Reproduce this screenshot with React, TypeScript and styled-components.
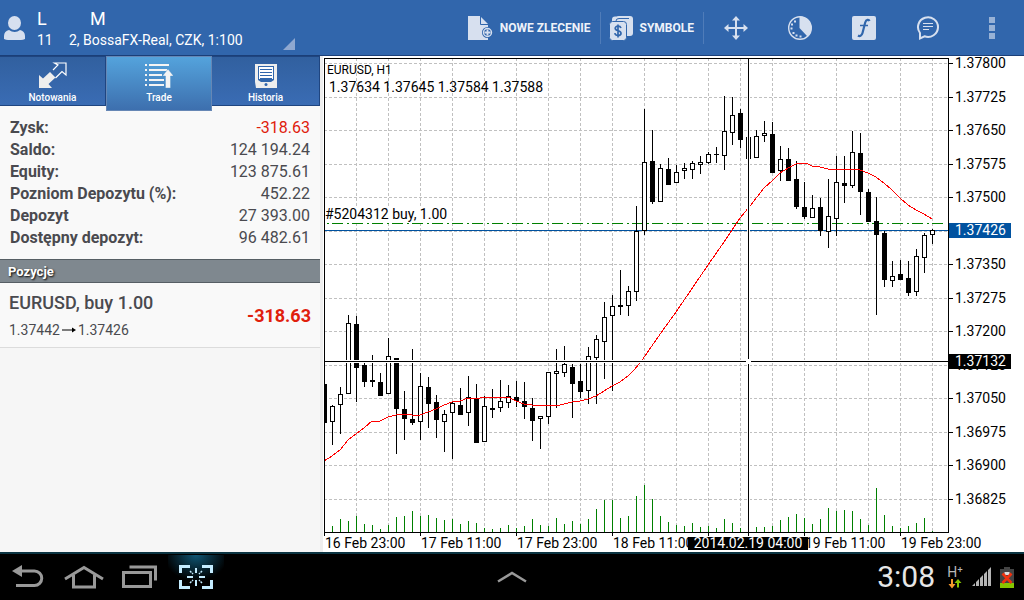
import React from "react";
import styled, { createGlobalStyle, css } from "styled-components";

const GlobalStyle = createGlobalStyle`
  * { box-sizing: border-box; }
  body { margin: 0; font-family: Roboto, "Liberation Sans", sans-serif; background: #fff; }
  button { font: inherit; color: inherit; border: 0; padding: 0; background: none; cursor: pointer; }
  svg { display: block; flex: none; }
`;

const Screen = styled.div`
  display: flex;
  flex-direction: column;
  min-height: 100vh;
`;

/* ---------- header ---------- */

const Header = styled.header`
  display: flex;
  justify-content: space-between;
  height: 56px;
  background: #3166ac;
  border-bottom: 1px solid #1b3f78;
  color: #fff;
`;

const Account = styled.button`
  display: flex;
  align-items: center;
  width: 295px;
  text-align: left;
`;

const AccountText = styled.span`
  flex: 1;
  display: flex;
  flex-direction: column;
  padding-left: 11px;
  padding-top: 3px;
  white-space: pre;
`;

const AccountName = styled.span`
  display: flex;
  font-size: 18px;
  line-height: 22px;
`;

const AccountInfo = styled.span`
  display: flex;
  font-size: 14px;
  line-height: 20px;
`;

const NamePart = styled.span<{ $w?: number }>`
  width: ${(p) => (p.$w ? `${p.$w}px` : "auto")};
`;

const Corner = styled.span`
  align-self: flex-end;
  margin-bottom: 5px;
  border-left: 12px solid transparent;
  border-bottom: 12px solid #8fa8d0;
`;

const Toolbar = styled.nav`
  display: flex;
  align-items: center;
`;

const TextAction = styled.button`
  display: flex;
  align-items: center;
  gap: 7px;
  height: 32px;
  padding: 0 9px 0 8px;
  border-right: 1px solid #4f7cb9;
  font-size: 12px;
  font-weight: 700;
  color: #eef2f9;
  white-space: nowrap;
`;

const IconAction = styled.button`
  display: flex;
  align-items: center;
  justify-content: center;
  width: 64px;
  height: 55px;
`;

/* ---------- left side ---------- */

const Main = styled.main`
  flex: 1;
  display: flex;
`;

const Side = styled.section`
  display: flex;
  flex-direction: column;
  width: 320px;
  flex: none;
  background: #f6f6f6;
`;

const Tabs = styled.div`
  display: grid;
  grid-template-columns: 106px 106px 1fr;
  height: 50px;
`;

const Tab = styled.button<{ $active?: boolean }>`
  display: flex;
  flex-direction: column;
  align-items: center;
  justify-content: flex-start;
  gap: 1px;
  height: 50px;
  padding-top: 5px;
  color: #fff;
  font-size: 10px;
  font-weight: 500;
  line-height: 14px;
  background: linear-gradient(#31609f, #3a6cb4);
  border: 1px solid #1f4580;
  border-width: 1px 1px 1px 0;
  ${(p) =>
    p.$active &&
    css`
      position: relative;
      height: 55px;
      background: linear-gradient(#54a3dc, #3d6fae);
      border: 1px solid #6687b5;
    `}
`;

const Summary = styled.table`
  border-collapse: collapse;
  width: 100%;
  background: #f9f9f9;
  border-top: 11px solid #f9f9f9;
  border-bottom: 10px solid #f9f9f9;
  color: #4a4a4f;
  font-size: 16px;
  th, td { padding: 0; height: 22px; line-height: 22px; }
  th { text-align: left; padding-left: 10px; font-weight: 700; }
  td { text-align: right; padding-right: 10px; }
`;

const Value = styled.td<{ $loss?: boolean }>`
  color: ${(p) => (p.$loss ? "#e0200c" : "#4a4a4f")};
`;

const SectionTitle = styled.h2`
  margin: 0;
  height: 24px;
  padding-left: 8px;
  background: #7f888f;
  border-top: 1px solid #565e64;
  border-bottom: 1px solid #565e64;
  color: #fff;
  font-size: 13px;
  font-weight: 700;
  line-height: 23px;
  text-shadow: 1px 1px 2px #000;
`;

const Position = styled.article`
  display: flex;
  align-items: center;
  justify-content: space-between;
  height: 65px;
  padding: 0 9px;
  background: #f9f9f9;
  border-bottom: 1px solid #dcdcdc;
  color: #4a4a4f;
`;

const PositionText = styled.div`
  padding-top: 2px;
`;

const PositionName = styled.div`
  font-size: 18px;
  font-weight: 500;
  line-height: 28px;
`;

const PositionPrices = styled.div`
  display: flex;
  align-items: center;
  gap: 2px;
  font-size: 14px;
  line-height: 26px;
`;

const Profit = styled.div`
  font-size: 18px;
  font-weight: 700;
  color: #e0200c;
`;

/* ---------- chart ---------- */

const Chart = styled.section`
  flex: 1;
  min-width: 0;
  display: grid;
  grid-template-columns: minmax(0, 1fr) 70px;
  grid-template-rows: 1fr 16px;
  padding-left: 4px;
  background: linear-gradient(90deg, #eeeeee 3px, #fff 3px);
  color: #000;
  font-size: 14px;
`;

const Plot = styled.div`
  position: relative;
  min-height: 480px;
`;

const PlotSvg = styled.svg`
  width: 100%;
  height: 100%;
  background: #fff;
`;

const PlotText = styled.span<{ $top: number; $left: number; $small?: boolean; $fill?: boolean }>`
  position: absolute;
  top: ${(p) => p.$top}px;
  left: ${(p) => p.$left}px;
  font-size: ${(p) => (p.$small ? 12 : 14)}px;
  line-height: 14px;
  white-space: pre;
  background: ${(p) => (p.$fill ? "#fff" : "none")};
`;

const PriceAxis = styled.div`
  position: relative;
  display: flex;
  flex-direction: column;
  justify-content: space-between;
  height: 450px;
  padding-left: 1px;
  line-height: 14px;
`;

const PriceTag = styled.span<{ $top: number; $color: string }>`
  position: absolute;
  left: -5px;
  top: ${(p) => p.$top}px;
  width: 62px;
  height: 15px;
  padding-left: 6px;
  line-height: 15px;
  background: ${(p) => p.$color};
  color: #fff;
`;

const TimeAxis = styled.div`
  position: relative;
  grid-column: 1 / -1;
  display: grid;
  grid-template-columns: repeat(6, 96fr) 124fr;
  line-height: 14px;
  white-space: nowrap;
`;

const TimeLabel = styled.span`
  padding-left: 1px;
`;

const TimeTag = styled.span`
  position: absolute;
  top: 1px;
  left: 52%;
  width: 120px;
  height: 13px;
  line-height: 13px;
  text-align: center;
  background: #000;
  color: #fff;
`;

type Candle = [number, number, number, number, 0 | 1];

/* high, low, body top, body bottom, filled; one entry per hour, 8 units apart */
const candles: Candle[] = [
  [384, 423, 384, 423, 1], [405, 445, 406, 422, 0], [387, 434, 394, 405, 0], [315, 394, 323, 394, 0],
  [316, 402, 324, 368, 1], [362, 387, 365, 382, 1], [355, 387, 380, 382, 1], [373, 396, 382, 396, 1],
  [338, 394, 356, 394, 0], [358, 454, 358, 409, 1], [391, 440, 409, 419, 1], [349, 425, 419, 423, 1],
  [373, 440, 386, 422, 0], [377, 428, 387, 404, 1], [395, 438, 402, 420, 1], [410, 452, 414, 422, 0],
  [402, 459, 403, 413, 0], [388, 415, 405, 415, 1], [376, 426, 397, 413, 0], [384, 443, 399, 443, 1],
  [396, 442, 406, 442, 0], [389, 418, 408, 410, 1], [380, 412, 401, 408, 0], [385, 408, 396, 403, 0],
  [381, 407, 397, 401, 1], [382, 419, 401, 407, 1], [398, 441, 408, 421, 1], [416, 449, 416, 419, 0],
  [372, 424, 372, 417, 0], [349, 408, 371, 374, 0], [346, 377, 364, 373, 0], [364, 418, 367, 384, 1],
  [364, 398, 381, 392, 1], [347, 404, 356, 391, 0], [335, 404, 339, 358, 0], [302, 379, 317, 342, 0],
  [295, 391, 306, 316, 0], [270, 315, 305, 307, 1], [286, 316, 291, 306, 0], [206, 301, 231, 292, 0],
  [109, 235, 162, 231, 0], [130, 204, 161, 202, 1], [164, 202, 168, 202, 0], [158, 185, 169, 185, 1],
  [165, 183, 172, 183, 0], [163, 179, 168, 171, 0], [161, 179, 163, 170, 0], [156, 174, 162, 165, 0],
  [152, 164, 154, 163, 0], [147, 163, 154, 155, 1], [96, 170, 131, 156, 0], [97, 145, 115, 133, 0],
  [109, 148, 113, 140, 1], [137, 159, 137, 159, 1], [130, 158, 136, 158, 0], [121, 142, 133, 136, 0],
  [122, 173, 134, 173, 1], [146, 181, 159, 171, 0], [148, 181, 159, 181, 1], [161, 209, 179, 207, 1],
  [182, 219, 207, 217, 1], [195, 218, 208, 218, 0], [198, 236, 207, 231, 1], [179, 248, 216, 232, 0],
  [156, 236, 182, 219, 0], [156, 203, 183, 186, 1], [131, 188, 152, 186, 0], [133, 215, 153, 192, 1],
  [189, 222, 192, 222, 1], [197, 315, 221, 235, 1], [231, 287, 233, 280, 1], [261, 287, 276, 281, 0],
  [260, 280, 274, 280, 1], [261, 296, 278, 293, 1], [249, 296, 256, 292, 0], [233, 273, 235, 258, 0],
  [229, 244, 230, 235, 0],
];

const volumes = [
  532, 526, 519, 521, 516, 524, 525, 529, 525, 517, 516, 511, 516, 515, 518, 520, 519, 524, 521, 523,
  528, 529, 528, 525, 528, 526, 519, 525, 526, 518, 524, 521, 524, 519, 509, 500, 500, 518, 516, 496,
  485, 499, 516, 522, 525, 526, 523, 527, 526, 528, 519, 523, 528, 532, 527, 527, 526, 520, 517, 514,
  518, 524, 519, 508, 511, 510, 511, 519, 525, 488, 515, 526, 528, 526, 523, 518, 531,
];

const average =
  "324,461 332,456 340,450 348,440 356,434 364,428 372,421 380,421 388,417 396,415 404,414 412,415 420,415 428,412 436,409 444,405 452,402 460,401 468,398 476,399 484,397 508,397 516,401 524,404 532,405 540,406 548,405 556,406 564,404 572,402 580,401 588,399 596,396 604,391 612,386 620,382 628,376 634,370 640,363 663,330 676,312 708,265 724,242 740,218 750,206 764,188 772,181 780,173 788,168 796,164 806,163 812,166 820,167 828,169 844,170 852,169 860,170 868,173 876,177 884,183 892,190 900,198 908,205 916,210 924,214 932,219";

const gridY = [63, 97, 130, 164, 197, 231, 264, 298, 331, 365, 398, 432, 465, 499];
const gridX = Array.from({ length: 19 }, (_, i) => 356 + i * 32);
const ticksX = [324, 420, 516, 612, 708, 804, 900];
const prices = [
  "1.37800", "1.37725", "1.37650", "1.37575", "1.37500", "1.37425", "1.37350",
  "1.37275", "1.37200", "1.37125", "1.37050", "1.36975", "1.36900", "1.36825",
];
const times = [
  "16 Feb 23:00", "17 Feb 11:00", "17 Feb 23:00", "18 Feb 11:00", "18 Feb 23:00", "19 Feb 11:00", "19 Feb 23:00",
];

function PriceChart() {
  return (
    <PlotSvg viewBox="324 56 630 480" preserveAspectRatio="none" shapeRendering="crispEdges" role="img" aria-label="EURUSD H1">
      <clipPath id="plot"><rect x="324" y="58" width="625" height="475" /></clipPath>
      <g stroke="#c0c0c0" strokeDasharray="3 2">
        {gridY.map((y) => <path key={y} d={`M324 ${y}.5H948`} />)}
        {gridX.map((x) => <path key={x} d={`M${x}.5 58V532`} />)}
      </g>
      {volumes.map((v, i) => <rect key={i} x={324 + i * 8} y={v} width="1" height={532 - v} fill="#008000" />)}
      <path d="M324 223.5H944" stroke="#008000" strokeDasharray="11 4 2 3" strokeDashoffset="12" />
      <path d="M324 230.5H948" stroke="#0052a0" />
      <g clipPath="url(#plot)">
        {candles.map(([hi, lo, top, bottom, filled], i) => {
          const x = 324 + i * 8;
          return (
            <g key={i}>
              <rect x={x} y={hi} width="1" height={lo - hi} />
              {filled ? (
                <rect x={x - 2} y={top} width="5" height={bottom - top} />
              ) : (
                <rect x={x - 1.5} y={top + 0.5} width="4" height={bottom - top - 1} fill="#fff" stroke="#000" />
              )}
            </g>
          );
        })}
      </g>
      <polyline points={average} fill="none" stroke="#f00" />
      <path d="M324 58.5H949M324.5 58V536M948.5 58V533M324 532.5H949" stroke="#000" />
      {ticksX.map((x) => <rect key={x} x={x} y="532" width="1" height="4" />)}
      {gridY.map((y) => <rect key={y} x="948" y={y} width="5" height="1" />)}
      <path d="M325 361.5H948M748.5 59V532" stroke="#fff" strokeWidth="3" />
      <path d="M324 361.5H746M751 361.5H954M748.5 58V359M748.5 364V536" stroke="#000" />
    </PlotSvg>
  );
}

/* ---------- icons ---------- */

const pale = "#d7e0ef";
const blue = "#3166ac";

const PersonIcon = () => (
  <svg width="26" height="26" viewBox="0 0 26 26" fill={pale}>
    <ellipse cx="14.500" cy="8" rx="6.500" ry="7" />
    <path d="M4 24v-3c0-3.500 2-5.500 5-6 3.500 2.500 8 2.500 11 0 3 .5 5 2.500 5 6v3q-2 1-4 1H8q-2 0-4-1z" />
  </svg>
);

const NewOrderIcon = () => (
  <svg width="25" height="26" viewBox="0 0 25 26">
    <path d="M0 1h12l8 8v16H0z" fill={pale} />
    <path d="M12.500 1v8.500H20" fill="none" stroke={blue} />
    <circle cx="19.500" cy="17.500" r="5.500" fill={blue} />
    <circle cx="19.500" cy="17.500" r="4" fill={blue} stroke={pale} strokeWidth="1.400" />
    <path d="M19.500 14.500v6M16.500 17.500h6" stroke={pale} strokeWidth="1.800" />
  </svg>
);

const SymbolsIcon = () => (
  <svg width="24" height="26" viewBox="0 0 24 26">
    <rect x="7" y="1" width="17" height="20" rx="3" fill={pale} />
    <path d="M3 7V4.500q0-3 3-3h8q3 0 3 2.500h3.500q2.500 0 2.500 3V7z" fill={pale} />
    <path d="M7 6q0-2.500 3-2.500h10" fill="none" stroke={blue} />
    <rect x=".5" y="6.500" width="17" height="19" rx="3" fill={pale} stroke={blue} />
    <path d="M12 13c-.5-1.300-1.400-1.800-3-1.800-1.800 0-2.800.9-2.800 2.100 0 3.200 5.800 1.600 5.800 4.900 0 1.400-1.200 2.300-3 2.300s-2.900-.8-3.200-2.300M9 9.500v13" fill="none" stroke={blue} strokeWidth="1.700" />
  </svg>
);

const MoveIcon = () => (
  <svg width="24" height="24" viewBox="0 0 24 24" fill={pale}>
    <path d="M12 0l4 4.500h-3V11h6.500V8L24 12l-4.500 4v-3H13v6.500h3L12 24l-4-4.500h3V13H4.500v3L0 12l4.500-4v3H11V4.500H8z" />
  </svg>
);

const ClockIcon = () => (
  <svg width="26" height="26" viewBox="0 0 26 26">
    <circle cx="13" cy="13" r="11.300" fill="none" stroke={pale} strokeWidth="1.400" />
    <path d="M12.500 1.500H14a11.500 11.500 0 0 1 6.500 20l-8-8.500z" fill={pale} />
    <g fill={pale}>
      <rect x="7" y="5.500" width="2" height="2" /><rect x="4" y="8.500" width="2" height="2" />
      <rect x="3.500" y="12.500" width="2" height="2" /><rect x="5.500" y="17" width="2" height="2" />
      <rect x="8.500" y="19.500" width="2" height="2" /><rect x="12.500" y="20.500" width="2" height="2" />
    </g>
  </svg>
);

const FunctionIcon = () => (
  <svg width="24" height="24" viewBox="0 0 24 24">
    <rect width="24" height="24" rx="2" fill={pale} />
    <path d="M17.500 5c-.6-1.600-3.300-1.800-4.300 1.500l-2.700 10.500c-.8 3-2.800 3.600-4.500 2.500" fill="none" stroke={blue} strokeWidth="2.200" />
    <path d="M8 9.500h8" stroke={blue} strokeWidth="1.500" />
  </svg>
);

const ChatIcon = () => (
  <svg width="24" height="26" viewBox="0 0 24 26" fill="none" stroke={pale}>
    <path d="M4 23.500V18A10 9.800 0 1 1 8.500 21.300z" strokeWidth="2" />
    <path d="M7 8.500h10M7 11.500h10M7 14.500h6" strokeWidth="1.200" />
  </svg>
);

const MoreIcon = () => (
  <svg width="6" height="22" viewBox="0 0 6 22" fill="#98b2d6" shapeRendering="crispEdges">
    <path d="M0 0h6v6H0zM0 8h6v6H0zM0 16h6v6H0z" />
  </svg>
);

const QuotesIcon = () => (
  <svg width="28" height="28" viewBox="0 0 28 28">
    <path d="M0 13l4 3.500 7-6.500 5.500 5.500-7 6.500L13 26H0z" fill="#eee" />
    <path d="M14 8l5-5-3.500-2H27v12l-4-3.500-6.500 6.500" fill="none" stroke="#fff" strokeWidth="1.200" />
  </svg>
);

const TradeIcon = () => (
  <svg width="28" height="28" viewBox="0 0 28 28" fill="#f4f4f4">
    <path d="M0 2h2v2H0zM4 2h20v2H4zM0 7h2v2H0zM4 7h18v2H4zM0 12h2v2H0zM4 12h13v2H4zM0 17h2v2H0zM4 17h15v2H4zM0 22h2v2H0zM4 22h15v2H4z" />
    <path d="M23 7l5.500 7H25.500v12h-5V14h-3z" stroke="#4d8fca" strokeWidth=".4" />
  </svg>
);

const HistoryIcon = () => (
  <svg width="22" height="28" viewBox="0 0 22 28">
    <path d="M0 2h22v24H1L0 20z" fill="#eee" />
    <path d="M3 4h16v14l-3 2H6l-3-2z" fill={blue} />
    <path d="M4 5h14v12H4z" fill="#fff" />
    <path d="M5 7.500h12M5 10.500h12M5 13.500h12M5 16.500h12" stroke={blue} />
    <circle cx="11" cy="22.500" r="1.500" fill={blue} />
  </svg>
);

const ArrowIcon = () => (
  <svg width="14" height="8" viewBox="0 0 14 8">
    <path d="M0 4h10" stroke="#000" /><path d="M10 1.500l4 2.500-4 2.500z" />
  </svg>
);

/* ---------- system bar ---------- */

const SystemBar = styled.footer`
  display: grid;
  grid-template-columns: 1fr auto 1fr;
  align-items: center;
  height: 48px;
  background: #000;
  border-top: 2px solid #0b3442;
`;

const NavKeys = styled.div`
  display: flex;
`;

const NavKey = styled.button<{ $glow?: boolean }>`
  display: flex;
  align-items: center;
  justify-content: center;
  width: 56px;
  height: 44px;
  background: ${(p) => (p.$glow ? "radial-gradient(ellipse 32px 26px at 50% 0, #0f5674, #000)" : "none")};
`;

const Status = styled.div`
  display: flex;
  align-items: center;
  justify-content: flex-end;
  gap: 8px;
  padding-right: 10px;
  color: #e6e6e6;
`;

const Clock = styled.time`
  font-size: 30px;
  line-height: 46px;
  padding-right: 3px;
`;

const Network = styled.span`
  display: flex;
  flex-direction: column;
  align-items: center;
  width: 18px;
  font-size: 14px;
  line-height: 13px;
  color: #b8b8b8;
`;

const BackIcon = () => (
  <svg width="32" height="24" viewBox="0 0 32 24">
    <path d="M0 6L10 0v12z" fill="#999" />
    <path d="M9 6h13.500a7 7 0 0 1 0 14.500H4" fill="none" stroke="#999" strokeWidth="3" />
  </svg>
);
const HomeIcon = () => (
  <svg width="40" height="24" viewBox="0 0 40 24" fill="none" stroke="#999" strokeWidth="3">
    <path d="M1 14L20 2.500 39 14" /><path d="M9.500 10v12h21V10" />
  </svg>
);
const RecentIcon = () => (
  <svg width="36" height="24" viewBox="0 0 36 24" fill="none" stroke="#999" strokeWidth="3">
    <path d="M1.500 7.500h27v14h-27z" /><path d="M7.500 2h26v13.500" />
  </svg>
);
const CaptureIcon = () => (
  <svg width="34" height="26" viewBox="0 0 34 26" fill="none" stroke="#c4ecff" strokeWidth="3">
    <path d="M1.500 9V2.500H11M23 2.500h9.500V9M32.500 16v7.500H23M11 23.500H1.500V16" />
    <path d="M17 4v5M17 16v6M8 13h6M20 13h6" strokeWidth="2" />
    <path d="M11 7l3 3M23 7l-3 3M11 19l3-3M23 19l-3-3" strokeWidth="1.500" strokeDasharray="2 1" />
  </svg>
);
const ChevronIcon = () => (
  <svg width="30" height="12" viewBox="0 0 30 12" fill="none" stroke="#999" strokeWidth="2.500">
    <path d="M1 10.500L15 2l14 8.500" />
  </svg>
);
const TrafficIcon = () => (
  <svg width="14" height="10" viewBox="0 0 14 10">
    <path d="M3 0h2v5h2.500L4 9.500.5 5H3z" fill="#f79a2c" />
    <path d="M9 8.500h2V4h2.500L10 0 6.500 4H9z" fill="#86c400" />
  </svg>
);
const SignalIcon = () => (
  <svg width="20" height="20" viewBox="0 0 20 20" fill="#b5b5b5">
    <path d="M0 19l3-3v3zM4 15l3-3v7H4zM8 11l3-3v11H8zM12 7l3-3v15h-3zM16 3l3-3v19h-3z" />
  </svg>
);
const BatteryIcon = () => (
  <svg width="14" height="21" viewBox="0 0 14 21">
    <path d="M4 0h6v2h4v19H0V2h4z" fill="#444" />
    <path d="M0 16h14v5H0z" fill="#86c400" />
    <path d="M4.500 5h5v3h-5z" fill="#ddd" />
    <path d="M2.500 6.500l9 9.500M11.500 6.500l-9 9.500" stroke="#f0320f" strokeWidth="2.600" />
  </svg>
);

const summary: [string, string][] = [
  ["Zysk:", "-318.63"],
  ["Saldo:", "124 194.24"],
  ["Equity:", "123 875.61"],
  ["Pozniom Depozytu (%):", "452.22"],
  ["Depozyt", "27 393.00"],
  ["Dostępny depozyt:", "96 482.61"],
];

export default function App() {
  return (
    <Screen>
      <GlobalStyle />
      <Header>
        <Account>
          <PersonIcon />
          <AccountText>
            <AccountName><NamePart $w={53}>L</NamePart><NamePart>M</NamePart></AccountName>
            <AccountInfo><NamePart $w={32}>11</NamePart><NamePart>2, BossaFX-Real, CZK, 1:100</NamePart></AccountInfo>
          </AccountText>
          <Corner />
        </Account>
        <Toolbar>
          <TextAction><NewOrderIcon />NOWE ZLECENIE</TextAction>
          <TextAction><SymbolsIcon />SYMBOLE</TextAction>
          <IconAction aria-label="Crosshair"><MoveIcon /></IconAction>
          <IconAction aria-label="Period"><ClockIcon /></IconAction>
          <IconAction aria-label="Indicators"><FunctionIcon /></IconAction>
          <IconAction aria-label="Chat"><ChatIcon /></IconAction>
          <IconAction aria-label="More"><MoreIcon /></IconAction>
        </Toolbar>
      </Header>

      <Main>
        <Side>
          <Tabs role="tablist">
            <Tab role="tab"><QuotesIcon />Notowania</Tab>
            <Tab role="tab" aria-selected $active><TradeIcon />Trade</Tab>
            <Tab role="tab"><HistoryIcon />Historia</Tab>
          </Tabs>
          <Summary>
            <tbody>
              {summary.map(([label, value]) => (
                <tr key={label}>
                  <th scope="row">{label}</th>
                  <Value $loss={value.startsWith("-")}>{value}</Value>
                </tr>
              ))}
            </tbody>
          </Summary>
          <SectionTitle>Pozycje</SectionTitle>
          <Position>
            <PositionText>
              <PositionName>EURUSD, buy 1.00</PositionName>
              <PositionPrices>1.37442<ArrowIcon />1.37426</PositionPrices>
            </PositionText>
            <Profit>-318.63</Profit>
          </Position>
        </Side>

        <Chart>
          <Plot>
            <PriceChart />
            <PlotText $top={7} $left={3} $small>EURUSD, H1</PlotText>
            <PlotText $top={24} $left={5}>1.37634 1.37645 1.37584 1.37588</PlotText>
            <PlotText $top={151} $left={1} $fill>#5204312 buy, 1.00</PlotText>
          </Plot>
          <PriceAxis>
            {prices.map((p) => <span key={p}>{p}</span>)}
            <PriceTag $top={167} $color="#0052a0">1.37426</PriceTag>
            <PriceTag $top={298} $color="#000">1.37132</PriceTag>
          </PriceAxis>
          <TimeAxis>
            {times.map((t) => <TimeLabel key={t}>{t}</TimeLabel>)}
            <TimeTag>2014.02.19 04:00</TimeTag>
          </TimeAxis>
        </Chart>
      </Main>

      <SystemBar>
        <NavKeys>
          <NavKey aria-label="Back"><BackIcon /></NavKey>
          <NavKey aria-label="Home"><HomeIcon /></NavKey>
          <NavKey aria-label="Recent"><RecentIcon /></NavKey>
          <NavKey aria-label="Capture" $glow><CaptureIcon /></NavKey>
        </NavKeys>
        <NavKey aria-label="Expand"><ChevronIcon /></NavKey>
        <Status>
          <Clock>3:08</Clock>
          <Network>H⁺<TrafficIcon /></Network>
          <SignalIcon />
          <BatteryIcon />
        </Status>
      </SystemBar>
    </Screen>
  );
}
